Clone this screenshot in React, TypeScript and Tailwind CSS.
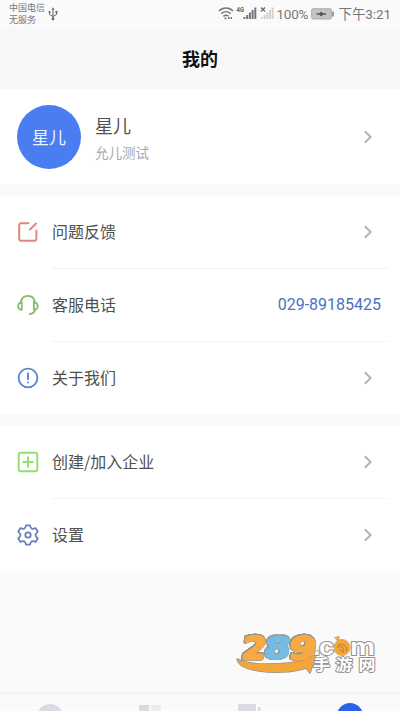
import React from "react";

function Chevron() {
  return (
    <svg className="h-[14px] w-[10px] shrink-0" viewBox="0 0 10 14" fill="none" stroke="#b4b4b4" strokeWidth="2">
      <path d="M1.8 1.2 7.6 7 1.8 12.8" />
    </svg>
  );
}

function FeedbackIcon() {
  return (
    <svg viewBox="0 0 22 22" className="h-[22px] w-[22px]" fill="none" stroke="#e28478" strokeWidth="1.9" strokeLinecap="round" strokeLinejoin="round">
      <path d="M11.500 2.200H4.200a2 2 0 0 0-2 2v13.600a2 2 0 0 0 2 2h13.200a2 2 0 0 0 2-2V9.500M13 8.500l6-6" />
    </svg>
  );
}

function HeadsetIcon() {
  return (
    <svg viewBox="0 0 22 22" className="h-[22px] w-[22px]" fill="none" stroke="#86bd63" strokeWidth="1.8" strokeLinecap="round" strokeLinejoin="round">
      <path d="M4 9C4 4.200 6.500 1.800 10.800 1.800S17.600 4.200 17.600 9M18 15.500c-.4 2.700-2 4.200-5.300 4.600" />
      <path d="M4.800 8.500v7.200c-2.200.3-3.600-1.200-3.600-3.600s1.400-3.900 3.600-3.600zM16.800 8.500v7.200c2.400.3 3.900-1.200 3.900-3.600s-1.500-3.900-3.900-3.600z" />
    </svg>
  );
}

function AboutIcon() {
  return (
    <svg viewBox="0 0 22 22" className="h-[22px] w-[22px]" fill="none" stroke="#5b88cf" strokeWidth="1.9" strokeLinecap="round">
      <circle cx="11" cy="11" r="9.4" />
      <path d="M11 6.500v5.800M11 15.400v.2" />
    </svg>
  );
}

function CreateIcon() {
  return (
    <svg viewBox="0 0 22 22" className="h-[22px] w-[22px]" fill="none" stroke="#93e070" strokeWidth="2" strokeLinecap="round">
      <rect x="1.700" y="1.700" width="18.600" height="18.600" rx="2" />
      <path d="M11 6.300v9.400M6.300 11h9.400" />
    </svg>
  );
}

function SettingsIcon() {
  return (
    <svg viewBox="0 0 22 22" className="h-[22px] w-[22px]" fill="none" stroke="#6682b8" strokeWidth="1.8" strokeLinejoin="round">
      <path d="M9 1.300h4q.5 2.700 1.800 3.300 1.300.6 3.700-.5l2.300 3.500Q18.500 9.500 18.500 11t2.300 3.400l-2.300 3.500q-2.400-1.100-3.700-.5T13 20.700H9q-.5-2.700-1.800-3.300t-3.700.5l-2.300-3.500Q3.500 12.500 3.500 11T1.200 7.600l2.300-3.500q2.400 1.100 3.700.5T9 1.300z" />
      <circle cx="11" cy="11" r="2.700" />
    </svg>
  );
}

function Row({ icon, label, phone, last }: { icon: React.ReactNode; label: string; phone?: string; last?: boolean }) {
  return (
    <div className="flex h-[73px] items-stretch pl-[17px]">
      <div className="flex w-[35px] shrink-0 items-center pb-[2px]">{icon}</div>
      <div className={"mr-[11px] flex flex-1 items-center justify-between border-b " + (last ? "border-transparent" : "border-[#f3f3f3]")}>
        <span className="pb-[3px] text-[16px] leading-6 text-[#505050]">{label}</span>
        {phone ? (
          <span className="mr-[8px] font-[Roboto] text-[16px] text-[#4873bd]">{phone}</span>
        ) : (
          <span className="mr-[16px] flex"><Chevron /></span>
        )}
      </div>
    </div>
  );
}

function StatusBar() {
  return (
    <div className="flex h-[28px] justify-between pl-[9px] pr-[9px] text-[#777]">
      <div className="flex">
        <div className="pt-[2px] text-[9px] leading-[12px]">
          <div>中国电信</div>
          <div>无服务</div>
        </div>
        <svg className="ml-[3px] mt-[7px] h-[14px] w-[10px]" viewBox="0 0 10 14" fill="none" stroke="#666" strokeWidth="1">
          <path d="M5 2v10M1.500 5v2.500L5 9.500l3.500-2V5" />
          <path d="m5 .2 1.500 2.300h-3z" fill="#666" stroke="none" />
          <circle cx="5" cy="12" r="1.400" fill="#666" stroke="none" />
          <circle cx="1.500" cy="5" r="1.100" fill="#666" stroke="none" />
          <path d="M7.500 4h2v2h-2z" fill="#666" stroke="none" />
        </svg>
      </div>
      <div className="flex h-[28px] items-center">
        <svg className="h-[16px] w-[57px]" viewBox="220 6 57 16">
          <g fill="none" stroke="#777" strokeWidth="1.500">
            <path d="M221 11c4-4 10-4 14 0M223.200 13.800c3-2.800 6.800-2.800 9.600 0M225.400 16.300c1.800-1.500 3.500-1.500 5.200 0" />
          </g>
          <path d="M226.500 17.500h2v1.800h-2zM230 17h1.500v2H230zM232.500 17h1.500v2h-1.500z" fill="#777" />
          <text x="238.500" y="12.200" fontSize="6.500" fontWeight="700" fill="#666" fontFamily="Roboto" textLength="7.500" lengthAdjust="spacingAndGlyphs">4G</text>
          <path d="M245.500 17h2v2h-2zM248.200 15h2v4h-2zM250.900 12.500h2V19h-2zM253.600 10h2v9h-2zM256.300 7.500h2V19h-2z" fill="#777" />
          <path d="m263 7.500 4 4m0-4-4 4" stroke="#666" strokeWidth="1.200" />
          <path d="M263 17h2v2h-2zM265.700 15h2v4h-2zM268.400 12.500h2V19h-2zM271 10h2v9h-2zM273.700 7.500h2V19h-2z" fill="#d2d2d2" />
        </svg>
        <span className="ml-[2px] w-[31px] whitespace-nowrap font-[Roboto] text-[13.500px] tracking-[-0.3px] leading-5">100%</span>
        <svg className="ml-[3px] h-[12px] w-[23px]" viewBox="0 0 23 12">
          <rect x=".6" y=".8" width="19.800" height="10.200" rx="1.500" fill="#c4c4c4" stroke="#aaa" />
          <path d="M21.300 3.500h1.400v5h-1.400z" fill="#777" />
          <path d="M5.500 5.300h3L10 3.500l2 1.800h3v1.400h-3l-2 1.800-1.500-1.800h-3z" fill="#555" />
        </svg>
        <span className="ml-[5px] whitespace-nowrap font-[Roboto,'Noto_Sans_CJK_SC',sans-serif] text-[13.500px] tracking-[-0.1px] leading-5">下午3:21</span>
      </div>
    </div>
  );
}

function Watermark() {
  return (
    <svg className="absolute left-[232px] top-[628px] h-[50px] w-[148px]" viewBox="232 628 148 50">
      <g stroke="#929292" strokeLinejoin="round" paintOrder="stroke">
        <path d="M237 659q8 5 30 5 24 0 37-4l-2-1 14-4-6 18-4-5c-14 5-34 5-47 3-13-2-20-5-22-12z" fill="#f5a63a" strokeWidth="1.500" />
        <g
          className="[filter:drop-shadow(0.6px_0_0_#929292)_drop-shadow(-0.6px_0_0_#929292)_drop-shadow(0_0.6px_0_#929292)_drop-shadow(0_-0.6px_0_#929292)]"
          fontFamily="'DejaVu Sans', sans-serif" fontWeight="700" fontSize="31" strokeWidth="2.400"
        >
          <text transform="translate(241 659) skewX(-8)" fill="#f7aa42" stroke="#f7aa42" textLength="24" lengthAdjust="spacingAndGlyphs">2</text>
          <text transform="translate(288 659) skewX(-8)" fill="#f7aa42" stroke="#f7aa42" textLength="27" lengthAdjust="spacingAndGlyphs">9</text>
        </g>
        <text
          className="[filter:drop-shadow(0.6px_0_0_#929292)_drop-shadow(-0.6px_0_0_#929292)_drop-shadow(0_0.6px_0_#929292)_drop-shadow(0_-0.6px_0_#929292)]"
          fontFamily="'DejaVu Sans', sans-serif" fontWeight="700" fontSize="31" strokeWidth="2"
          transform="translate(263 659) skewX(-8)" fill="#75bce3" stroke="#75bce3" textLength="26" lengthAdjust="spacingAndGlyphs"
        >8</text>
        <g fontFamily="'Liberation Sans', sans-serif" fontWeight="700" fontSize="24" fill="#fff" strokeWidth="2">
          <text x="313.500" y="654.500">.</text>
          <text x="319" y="654.500" textLength="15" lengthAdjust="spacingAndGlyphs">c</text>
          <text x="350" y="654.500" textLength="25" lengthAdjust="spacingAndGlyphs">m</text>
        </g>
        <circle cx="342" cy="647.500" r="8" fill="#f5a63a" strokeWidth=".7" />
        <path d="m337.500 641-3-3.500 2.500.5.500-2 2 1-1 2 2 2" fill="#f5a63a" strokeWidth=".7" />
        <path d="M337 648c3-4 8-1 6 5M339.500 650c2-1 2.500 0 2 2M338 645c5-3 10 2 8 7" fill="none" stroke="#9a763f" strokeWidth=".8" />
        <g fontFamily="'Noto Sans CJK SC', sans-serif" fontWeight="700" fontSize="15" fill="#fff" strokeWidth="1.800">
          <text x="313" y="669.500" textLength="17" lengthAdjust="spacingAndGlyphs">手</text>
          <text x="335.500" y="669.500" textLength="17" lengthAdjust="spacingAndGlyphs">游</text>
          <text x="358.500" y="669.500" textLength="17" lengthAdjust="spacingAndGlyphs">网</text>
        </g>
      </g>
    </svg>
  );
}

export default function App() {
  return (
    <div className="relative flex h-[711px] w-[400px] flex-col overflow-hidden bg-[#fafafa] font-['Noto_Sans_CJK_SC',sans-serif]">
      <StatusBar />
      <header className="flex h-[61px] items-center justify-center bg-[#f8f8f8] text-[18px] font-bold text-[#111]">我的</header>
      <section className="flex h-[95px] items-center bg-white pl-[17px] pr-[27px]">
        <div className="flex h-[64px] w-[64px] items-center justify-center rounded-full bg-[#4a7df0] text-[17px] text-[#eef3ff]">星儿</div>
        <div className="ml-[14px] flex-1 pt-[3px]">
          <div className="text-[18px] leading-[26px] text-[#505050]">星儿</div>
          <div className="mt-[2px] text-[13.500px] leading-[24px] text-[#aaa]">允儿测试</div>
        </div>
        <Chevron />
      </section>
      <section className="mt-[12px] h-[218px] bg-white">
        <Row icon={<FeedbackIcon />} label="问题反馈" />
        <Row icon={<HeadsetIcon />} label="客服电话" phone="029-89185425" />
        <Row icon={<AboutIcon />} label="关于我们" last />
      </section>
      <section className="mt-[12px] h-[145px] bg-white">
        <Row icon={<CreateIcon />} label="创建/加入企业" />
        <Row icon={<SettingsIcon />} label="设置" last />
      </section>
      <nav className="mt-auto grid h-[19px] grid-cols-4 overflow-hidden border-t-2 border-[#f3f3f3]">
        <svg className="h-[17px] w-[100px]" viewBox="0 0 100 17"><circle cx="50" cy="23" r="13" fill="#d8dae6" /></svg>
        <svg className="h-[17px] w-[100px]" viewBox="0 0 100 17"><path d="M39 11h10v6H39z" fill="#d8dae6" /><path d="M51 11h10v6H51z" fill="#ececec" /></svg>
        <svg className="h-[17px] w-[100px]" viewBox="0 0 100 17"><path d="M38 10h18v7H38zM58 13h2.500v4H58z" fill="#d8dae6" /></svg>
        <svg className="h-[17px] w-[100px]" viewBox="0 0 100 17"><circle cx="50" cy="22" r="13" fill="#2a62e8" /></svg>
      </nav>
      <Watermark />
    </div>
  );
}
